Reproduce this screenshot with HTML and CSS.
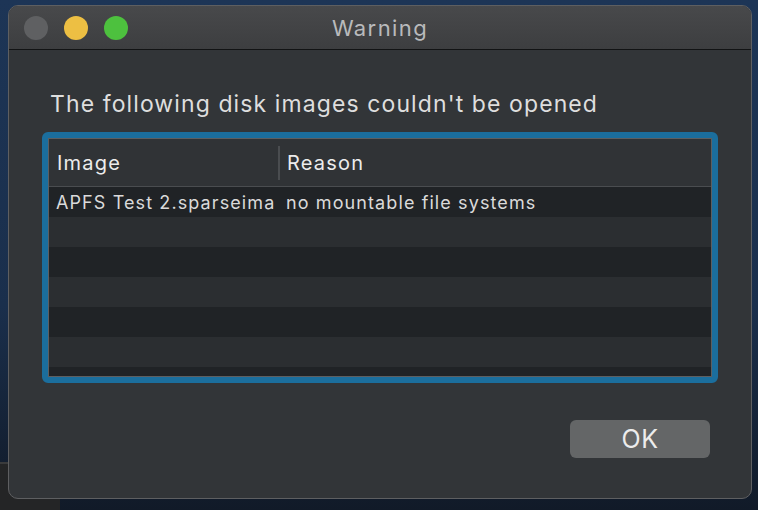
FILE: index.html
```html
<!DOCTYPE html>
<html>
<head>
<meta charset="utf-8">
<link rel="stylesheet" href="styles.css">
</head>
<body>
<div class="desk-panel"></div>
<div class="window">
  <div class="titlebar">
    <div class="lights">
      <span class="light light-gray"></span>
      <span class="light light-yellow"></span>
      <span class="light light-green"></span>
    </div>
    <div class="title">Warning</div>
    <div></div>
  </div>
  <div class="content">
    <h1 class="heading">The following disk images couldn't be opened</h1>
    <div class="table-ring">
      <div class="table">
        <div class="thead">
          <div class="th th-image">Image</div>
          <div class="th-sep"></div>
          <div class="th th-reason">Reason</div>
        </div>
        <div class="row row-dark">
          <div class="td td-image">APFS Test 2.sparseima</div>
          <div class="td td-reason">no mountable file systems</div>
        </div>
        <div class="row row-light"></div>
        <div class="row row-dark"></div>
        <div class="row row-light"></div>
        <div class="row row-dark"></div>
        <div class="row row-light"></div>
        <div class="row row-dark"></div>
      </div>
    </div>
    <div class="actions">
      <button class="ok">OK</button>
    </div>
  </div>
</div>
</body>
</html>
```

FILE: styles.css
```css
html, body {
  margin: 0;
  height: 510px;
  overflow: hidden;
}
body {
  position: relative;
  box-sizing: border-box;
  padding: 5px 6px 0 8px;
  background: linear-gradient(180deg, #1d3556 0%, #1a2f4c 60%, #111a28 100%);
  font-family: Inter, "Noto Sans", "Liberation Sans", sans-serif;
}
.desk-panel {
  position: absolute;
  left: 0;
  top: 462px;
  width: 60px;
  height: 48px;
  background: #242526;
  border-top: 2px solid #3a3b3c;
}
.window {
  position: relative;
  width: 744px;
  height: 494px;
  box-sizing: border-box;
  border: 1px solid #5e5f61;
  border-radius: 10px;
  background: #323538;
  overflow: hidden;
  display: flex;
  flex-direction: column;
}
.titlebar {
  height: 43px;
  flex: none;
  border-bottom: 1px solid #121314;
  background: linear-gradient(180deg, #48494b 0%, #3d3e40 100%);
  display: grid;
  grid-template-columns: 1fr auto 1fr;
  align-items: center;
}
.lights {
  display: flex;
  gap: 16px;
  padding-left: 15px;
}
.light {
  width: 24px;
  height: 24px;
  border-radius: 50%;
  display: block;
}
.light-gray { background: #5f6062; }
.light-yellow { background: #edbf43; }
.light-green { background: #4dc13e; }
.title {
  color: #b9babc;
  font-size: 22px;
  letter-spacing: 1.4px;
  padding-top: 1px;
}
.content {
  flex: 1;
  display: flex;
  flex-direction: column;
  padding: 0 33px;
}
.heading {
  margin: 40px 0 14px 8px;
  font-size: 23px;
  line-height: 28px;
  font-weight: 400;
  letter-spacing: 1.1px;
  color: #dedede;
  white-space: nowrap;
}
.table-ring {
  width: 676px;
  height: 251px;
  box-sizing: border-box;
  border: 6px solid #1b6e9d;
  border-radius: 6px;
}
.table {
  height: 100%;
  box-sizing: border-box;
  border: 1px solid #5d5f61;
  background: #2b2e31;
  overflow: hidden;
}
.thead {
  height: 47px;
  border-bottom: 1px solid #4a4d50;
  background: #303336;
  display: flex;
  align-items: center;
}
.th {
  color: #ececec;
  font-size: 20px;
  letter-spacing: 1.2px;
}
.th-image {
  width: 221px;
  padding-left: 8px;
}
.th-sep {
  width: 2px;
  height: 34px;
  background: #4a4d50;
}
.th-reason {
  padding-left: 7px;
}
.row {
  height: 30px;
  display: flex;
  align-items: center;
}
.row-dark { background: #202326; }
.row-light { background: #2b2e31; }
.td {
  color: #dadada;
  font-size: 18px;
  letter-spacing: 1.1px;
  white-space: nowrap;
}
.td-image {
  width: 223px;
  padding-left: 7px;
}
.td-reason {
  padding-left: 7px;
}
.actions {
  display: flex;
  justify-content: flex-end;
  padding-top: 37px;
  padding-right: 8px;
}
.ok {
  width: 140px;
  height: 38px;
  border: none;
  border-radius: 6px;
  background: #646667;
  color: #ececec;
  font-family: Inter, "Noto Sans", "Liberation Sans", sans-serif;
  font-size: 25px;
  letter-spacing: 0.5px;
  padding: 0;
}
```
